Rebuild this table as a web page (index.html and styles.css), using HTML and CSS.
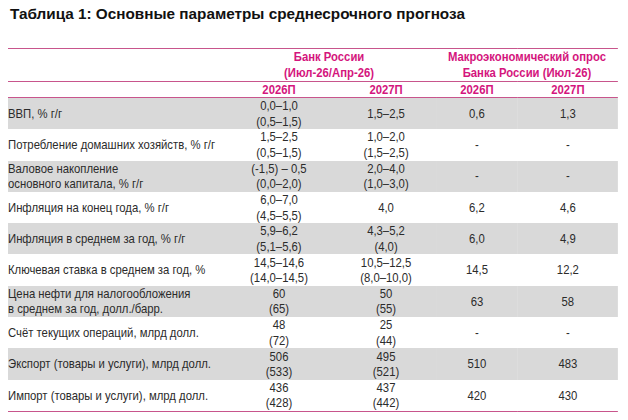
FILE: index.html
```html
<!DOCTYPE html>
<html lang="ru">
<head>
<meta charset="utf-8">
<link rel="stylesheet" href="styles.css">
</head>
<body>
<h1 class="title">Таблица 1: Основные параметры среднесрочного прогноза</h1>
<div class="frame">
<table class="forecast">
  <colgroup>
    <col class="c-label"><col class="c-b1"><col class="c-b2"><col class="c-s1"><col class="c-s2">
  </colgroup>
  <thead>
    <tr class="group">
      <th></th>
      <th colspan="2">Банк России<br>(Июл-26/Апр-26)</th>
      <th colspan="2">Макроэкономический опрос<br>Банка России (Июл-26)</th>
    </tr>
    <tr class="years">
      <th></th>
      <th>2026П</th><th>2027П</th><th>2026П</th><th>2027П</th>
    </tr>
  </thead>
  <tbody>
    <tr class="shade"><td>ВВП, % г/г</td><td>0,0–1,0<br>(0,5–1,5)</td><td>1,5–2,5</td><td>0,6</td><td>1,3</td></tr>
    <tr><td>Потребление домашних хозяйств, % г/г</td><td>1,5–2,5<br>(0,5–1,5)</td><td>1,0–2,0<br>(1,5–2,5)</td><td>-</td><td>-</td></tr>
    <tr class="shade"><td>Валовое накопление<br>основного капитала, % г/г</td><td>(-1,5) – 0,5<br>(0,0–2,0)</td><td>2,0–4,0<br>(1,0–3,0)</td><td>-</td><td>-</td></tr>
    <tr><td>Инфляция на конец года, % г/г</td><td>6,0–7,0<br>(4,5–5,5)</td><td>4,0</td><td>6,2</td><td>4,6</td></tr>
    <tr class="shade"><td>Инфляция в среднем за год, % г/г</td><td>5,9–6,2<br>(5,1–5,6)</td><td>4,3–5,2<br>(4,0)</td><td>6,0</td><td>4,9</td></tr>
    <tr><td>Ключевая ставка в среднем за год, %</td><td>14,5–14,6<br>(14,0–14,5)</td><td>10,5–12,5<br>(8,0–10,0)</td><td>14,5</td><td>12,2</td></tr>
    <tr class="shade"><td>Цена нефти для налогообложения<br>в среднем за год, долл./барр.</td><td>60<br>(65)</td><td>50<br>(55)</td><td>63</td><td>58</td></tr>
    <tr><td>Счёт текущих операций, млрд долл.</td><td>48<br>(72)</td><td>25<br>(44)</td><td>-</td><td>-</td></tr>
    <tr class="shade"><td>Экспорт (товары и услуги), млрд долл.</td><td>506<br>(533)</td><td>495<br>(521)</td><td>510</td><td>483</td></tr>
    <tr class="last"><td>Импорт (товары и услуги), млрд долл.</td><td>436<br>(428)</td><td>437<br>(442)</td><td>420</td><td>430</td></tr>
  </tbody>
</table>
</div>
</body>
</html>
```

FILE: styles.css
```css
html, body {
  margin: 0;
  padding: 0;
  background: #ffffff;
  overflow: hidden;
}
body {
  padding: 0 10px 0 8px;
  font-family: "Liberation Sans", Arial, sans-serif;
  color: #2b2b2b;
}
.title {
  margin: 0;
  padding: 5px 0 0 2px;
  height: 48px;
  box-sizing: border-box;
  font-family: "Liberation Sans", Arial, sans-serif;
  font-size: 15.3px;
  font-weight: bold;
  color: #111111;
  line-height: 18px;
}
.frame {
  width: 610px;
  overflow: hidden;
}
/* Arial Narrow look: the table is set in Arial and condensed horizontally */
.forecast {
  width: 701px;
  border-collapse: collapse;
  table-layout: fixed;
  font-size: 13px;
  line-height: 15.5px;
  transform: scaleX(0.87);
  transform-origin: 0 0;
}
.c-label { width: 246px; }
.c-b1 { width: 131px; }
.c-b2 { width: 115px; }
.c-s1 { width: 94px; }
.c-s2 { width: 115px; }

.forecast th {
  color: #d4157d;
  font-weight: bold;
  text-align: center;
  padding: 0;
}
.group th {
  border-top: 1px solid #c8558c;
  border-bottom: 1px solid #c8558c;
  height: 31px;
  line-height: 16px;
  vertical-align: middle;
}
.years th {
  border-bottom: 1px solid #c8558c;
  height: 15px;
  line-height: 15px;
}
.forecast td {
  height: 31.3px;
  padding: 0;
  text-align: center;
  vertical-align: middle;
}
.forecast td:first-child {
  text-align: left;
}
.forecast tr.shade td {
  background: #d9d9d9;
}
.forecast tr.last td {
  border-bottom: 1px solid #c8558c;
}
```
